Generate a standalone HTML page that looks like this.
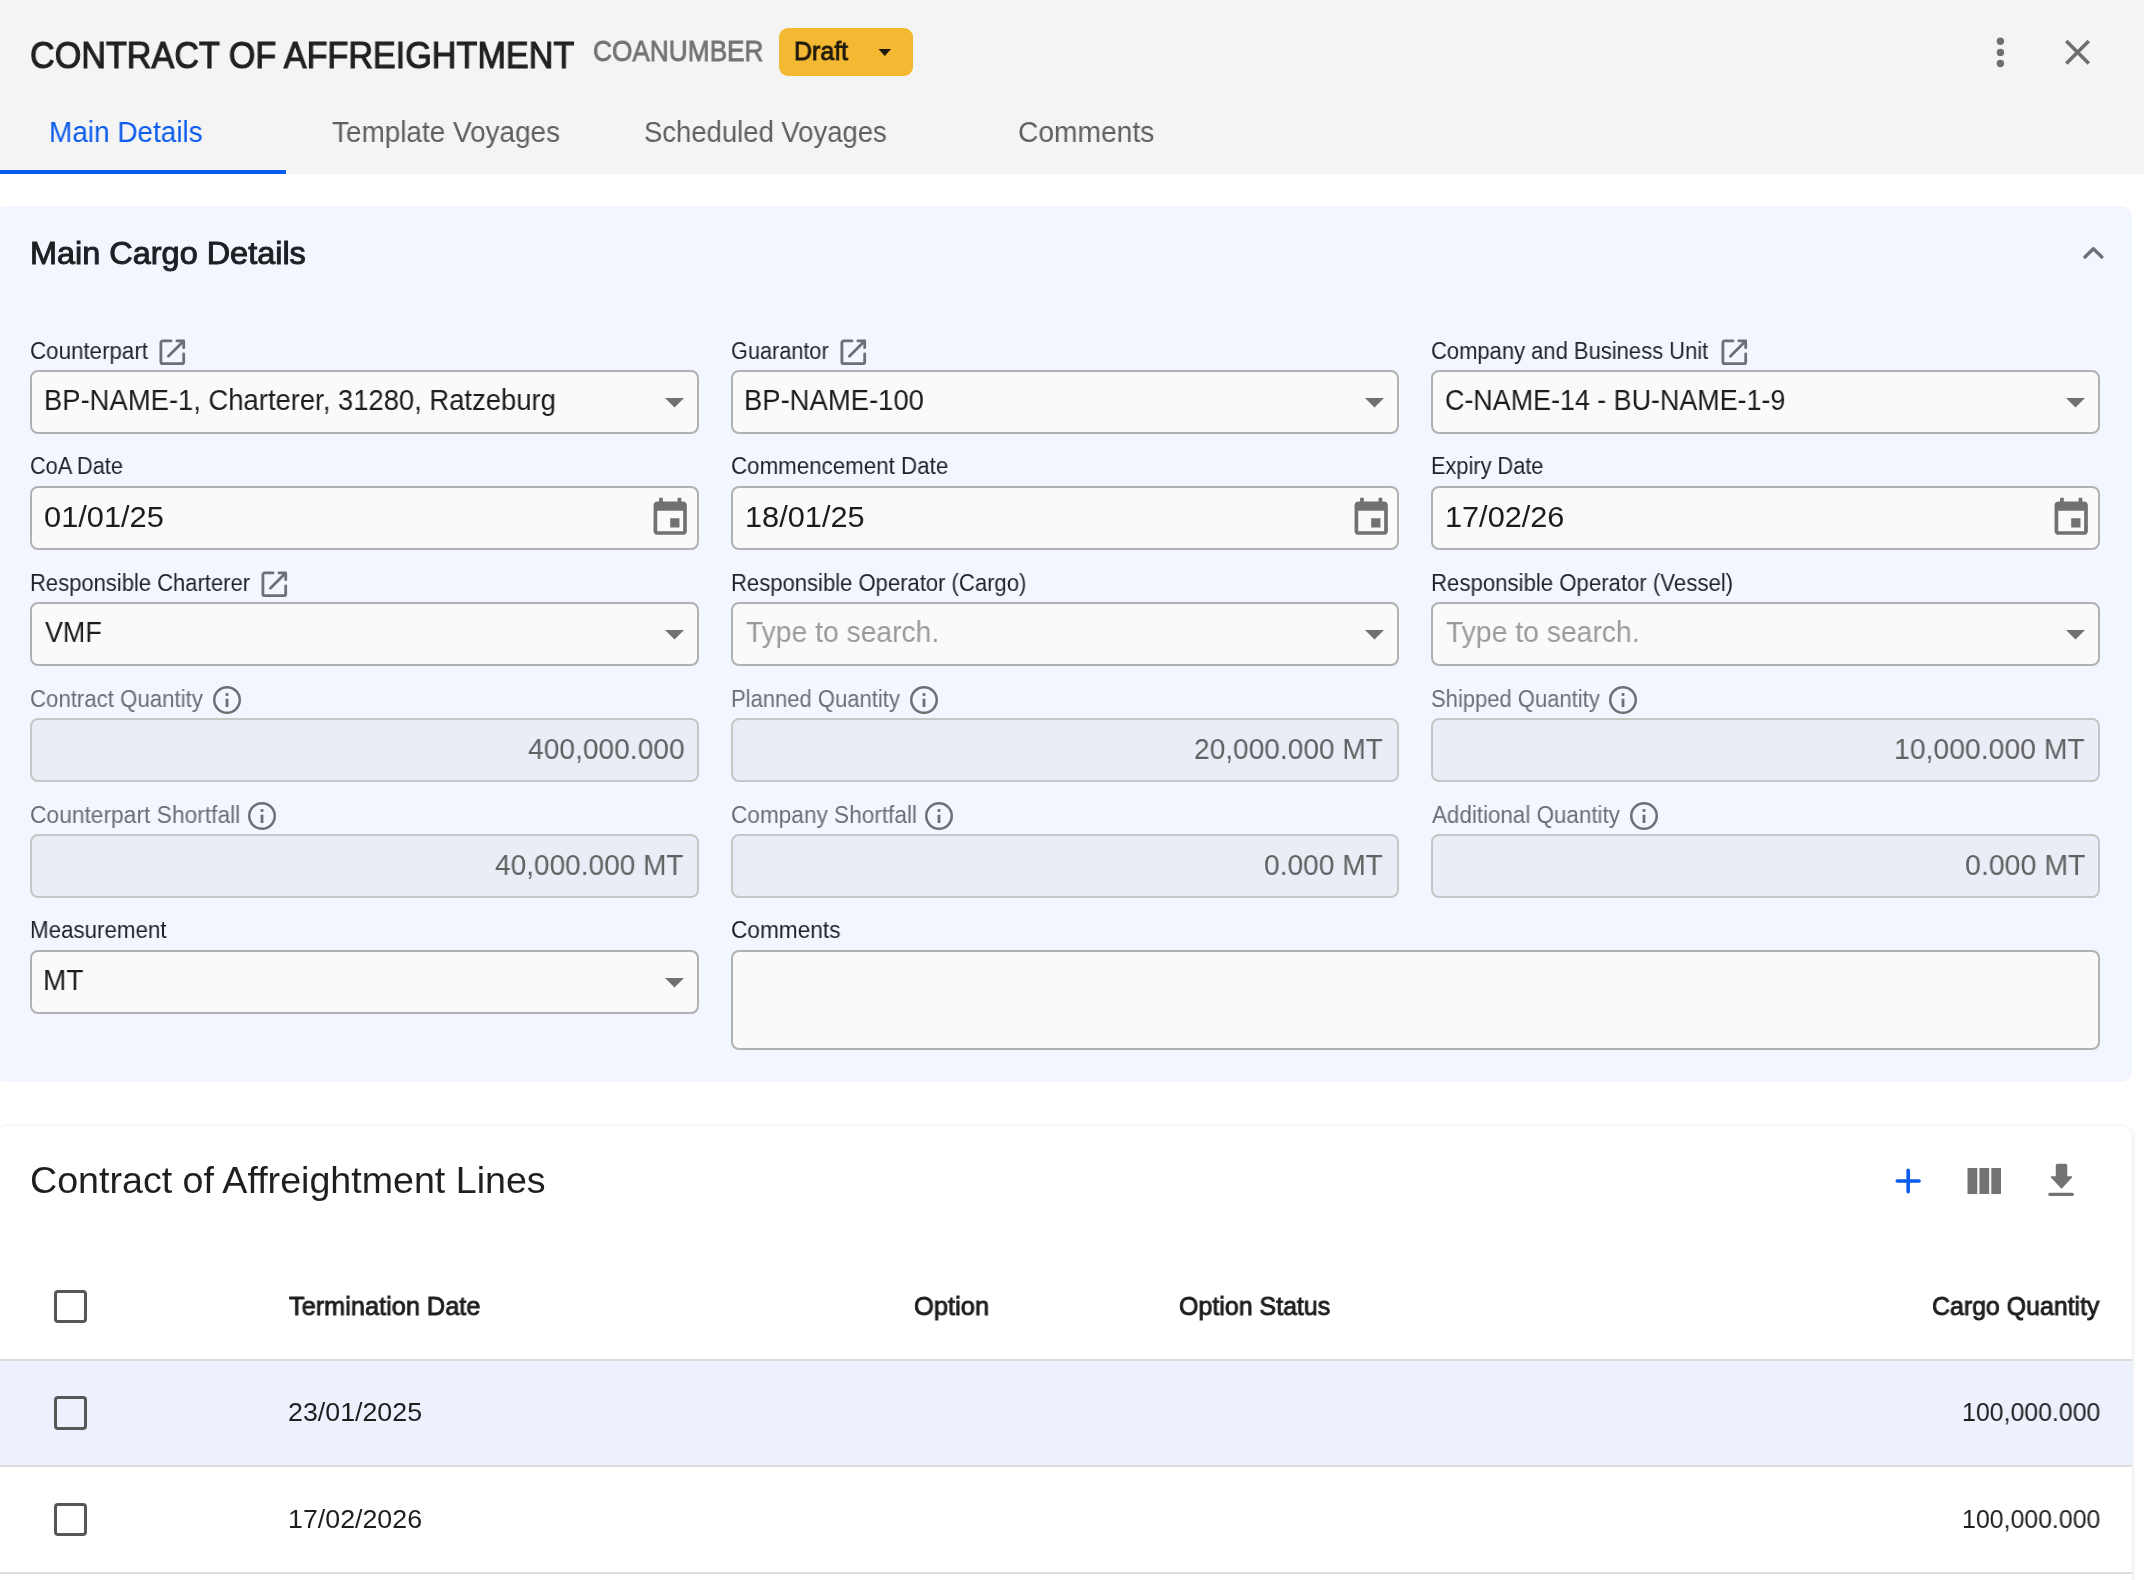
<!DOCTYPE html>
<html><head><meta charset="utf-8"><title>Contract of Affreightment</title>
<style>
html,body{margin:0;padding:0;width:2144px;height:1580px;overflow:hidden;background:#fff;}
body{position:relative;font-family:"Liberation Sans",sans-serif;}
body>div,body>svg,body>span{position:absolute;}
span{line-height:1;white-space:pre;will-change:transform;}
</style></head><body>
<div style="left:0px;top:0px;width:2144px;height:174px;background:#f4f4f4"></div>
<div style="left:0px;top:170px;width:286px;height:4px;background:#0b5cec"></div>
<div style="left:779px;top:28px;width:134px;height:48px;background:#f4b932;border-radius:9px"></div>
<svg style="left:872px;top:44px;" width="24" height="16" viewBox="0 0 24 16"><path d="M6.5,5.1 L19,5.1 L12.75,12 Z" fill="#1f1a0c"/></svg>
<svg style="left:1985px;top:30px;" width="30" height="44" viewBox="0 0 30 44"><circle cx="15.4" cy="11.2" r="3.7" fill="#6f6f6f"/><circle cx="15.4" cy="22.4" r="3.7" fill="#6f6f6f"/><circle cx="15.4" cy="33.5" r="3.7" fill="#6f6f6f"/></svg>
<svg style="left:2056px;top:31px;" width="44" height="44" viewBox="0 0 44 44"><g transform="translate(0.1,-0.1) scale(1.786)"><path d="M19 6.41L17.59 5 12 10.59 6.41 5 5 6.41 10.59 12 5 17.59 6.41 19 12 13.41 17.59 19 19 17.59 13.41 12z" fill="#6f6f6f"/></g></svg>
<div style="left:-4px;top:206px;width:2136px;height:876px;background:#f2f6fe;border-radius:10px"></div>
<svg style="left:2075px;top:236px;" width="38" height="30" viewBox="0 0 38 30"><path d="M10,21 L18.4,12.8 L26.8,21" fill="none" stroke="#6d6f73" stroke-width="3.3" stroke-linecap="round" stroke-linejoin="round"/></svg>
<svg style="left:157.6px;top:337.6px;" width="30" height="30" viewBox="0 0 30 30"><g fill="none" stroke="#6d6f73" stroke-width="2.8" stroke-linecap="round" stroke-linejoin="round"><path d="M13,2.9 H4.6 A1.7,1.7 0 0 0 2.9,4.6 V23.9 A1.7,1.7 0 0 0 4.6,25.6 H24 A1.7,1.7 0 0 0 25.7,23.9 V15.9"/><path d="M18.9,2.9 H25.7 V9.7"/><path d="M25.4,3.2 L10.4,18.2"/></g></svg>
<svg style="left:838.8px;top:337.6px;" width="30" height="30" viewBox="0 0 30 30"><g fill="none" stroke="#6d6f73" stroke-width="2.8" stroke-linecap="round" stroke-linejoin="round"><path d="M13,2.9 H4.6 A1.7,1.7 0 0 0 2.9,4.6 V23.9 A1.7,1.7 0 0 0 4.6,25.6 H24 A1.7,1.7 0 0 0 25.7,23.9 V15.9"/><path d="M18.9,2.9 H25.7 V9.7"/><path d="M25.4,3.2 L10.4,18.2"/></g></svg>
<svg style="left:1719.5px;top:337.6px;" width="30" height="30" viewBox="0 0 30 30"><g fill="none" stroke="#6d6f73" stroke-width="2.8" stroke-linecap="round" stroke-linejoin="round"><path d="M13,2.9 H4.6 A1.7,1.7 0 0 0 2.9,4.6 V23.9 A1.7,1.7 0 0 0 4.6,25.6 H24 A1.7,1.7 0 0 0 25.7,23.9 V15.9"/><path d="M18.9,2.9 H25.7 V9.7"/><path d="M25.4,3.2 L10.4,18.2"/></g></svg>
<div style="left:30px;top:370px;width:668.67px;height:64px;background:#fafafa;border:2px solid #b1b1b1;border-radius:8px;box-sizing:border-box"></div>
<svg style="left:663px;top:396px;" width="24" height="14" viewBox="0 0 24 14"><path d="M2,2 L21,2 L11.5,11.6 Z" fill="#717171"/></svg>
<div style="left:730.67px;top:370px;width:668.67px;height:64px;background:#fafafa;border:2px solid #b1b1b1;border-radius:8px;box-sizing:border-box"></div>
<svg style="left:1363px;top:396px;" width="24" height="14" viewBox="0 0 24 14"><path d="M2,2 L21,2 L11.5,11.6 Z" fill="#717171"/></svg>
<div style="left:1431.33px;top:370px;width:668.67px;height:64px;background:#fafafa;border:2px solid #b1b1b1;border-radius:8px;box-sizing:border-box"></div>
<svg style="left:2064px;top:396px;" width="24" height="14" viewBox="0 0 24 14"><path d="M2,2 L21,2 L11.5,11.6 Z" fill="#717171"/></svg>
<div style="left:30px;top:486px;width:668.67px;height:64px;background:#fafafa;border:2px solid #b1b1b1;border-radius:8px;box-sizing:border-box"></div>
<svg style="left:648px;top:496px;" width="46" height="46" viewBox="0 0 46 46"><g transform="scale(1.8500)"><path d="M17 12h-5v5h5v-5zM16 1v2H8V1H6v2H5c-1.11 0-1.99.9-1.99 2L3 19c0 1.1.89 2 2 2h14c1.1 0 2-.9 2-2V5c0-1.1-.9-2-2-2h-1V1h-2zm3 18H5V8h14v11z" fill="#717171"/></g></svg>
<div style="left:730.67px;top:486px;width:668.67px;height:64px;background:#fafafa;border:2px solid #b1b1b1;border-radius:8px;box-sizing:border-box"></div>
<svg style="left:1349px;top:496px;" width="46" height="46" viewBox="0 0 46 46"><g transform="scale(1.8500)"><path d="M17 12h-5v5h5v-5zM16 1v2H8V1H6v2H5c-1.11 0-1.99.9-1.99 2L3 19c0 1.1.89 2 2 2h14c1.1 0 2-.9 2-2V5c0-1.1-.9-2-2-2h-1V1h-2zm3 18H5V8h14v11z" fill="#717171"/></g></svg>
<div style="left:1431.33px;top:486px;width:668.67px;height:64px;background:#fafafa;border:2px solid #b1b1b1;border-radius:8px;box-sizing:border-box"></div>
<svg style="left:2049px;top:496px;" width="46" height="46" viewBox="0 0 46 46"><g transform="scale(1.8500)"><path d="M17 12h-5v5h5v-5zM16 1v2H8V1H6v2H5c-1.11 0-1.99.9-1.99 2L3 19c0 1.1.89 2 2 2h14c1.1 0 2-.9 2-2V5c0-1.1-.9-2-2-2h-1V1h-2zm3 18H5V8h14v11z" fill="#717171"/></g></svg>
<svg style="left:259.7px;top:570.0px;" width="30" height="30" viewBox="0 0 30 30"><g fill="none" stroke="#6d6f73" stroke-width="2.8" stroke-linecap="round" stroke-linejoin="round"><path d="M13,2.9 H4.6 A1.7,1.7 0 0 0 2.9,4.6 V23.9 A1.7,1.7 0 0 0 4.6,25.6 H24 A1.7,1.7 0 0 0 25.7,23.9 V15.9"/><path d="M18.9,2.9 H25.7 V9.7"/><path d="M25.4,3.2 L10.4,18.2"/></g></svg>
<div style="left:30px;top:602px;width:668.67px;height:64px;background:#fafafa;border:2px solid #b1b1b1;border-radius:8px;box-sizing:border-box"></div>
<svg style="left:663px;top:628px;" width="24" height="14" viewBox="0 0 24 14"><path d="M2,2 L21,2 L11.5,11.6 Z" fill="#717171"/></svg>
<div style="left:730.67px;top:602px;width:668.67px;height:64px;background:#fafafa;border:2px solid #b1b1b1;border-radius:8px;box-sizing:border-box"></div>
<svg style="left:1363px;top:628px;" width="24" height="14" viewBox="0 0 24 14"><path d="M2,2 L21,2 L11.5,11.6 Z" fill="#717171"/></svg>
<div style="left:1431.33px;top:602px;width:668.67px;height:64px;background:#fafafa;border:2px solid #b1b1b1;border-radius:8px;box-sizing:border-box"></div>
<svg style="left:2064px;top:628px;" width="24" height="14" viewBox="0 0 24 14"><path d="M2,2 L21,2 L11.5,11.6 Z" fill="#717171"/></svg>
<svg style="left:213.29999999999998px;top:685.5999999999999px;" width="28" height="28" viewBox="0 0 28 28"><circle cx="14" cy="14" r="12.75" fill="none" stroke="#6d6f73" stroke-width="2.5"/><rect x="12.6" y="7.1" width="2.8" height="2.8" fill="#6d6f73"/><rect x="12.6" y="12.7" width="2.8" height="8.3" fill="#6d6f73"/></svg>
<svg style="left:909.8000000000001px;top:685.5999999999999px;" width="28" height="28" viewBox="0 0 28 28"><circle cx="14" cy="14" r="12.75" fill="none" stroke="#6d6f73" stroke-width="2.5"/><rect x="12.6" y="7.1" width="2.8" height="2.8" fill="#6d6f73"/><rect x="12.6" y="12.7" width="2.8" height="8.3" fill="#6d6f73"/></svg>
<svg style="left:1608.9px;top:685.5999999999999px;" width="28" height="28" viewBox="0 0 28 28"><circle cx="14" cy="14" r="12.75" fill="none" stroke="#6d6f73" stroke-width="2.5"/><rect x="12.6" y="7.1" width="2.8" height="2.8" fill="#6d6f73"/><rect x="12.6" y="12.7" width="2.8" height="8.3" fill="#6d6f73"/></svg>
<div style="left:30px;top:718px;width:668.67px;height:64px;background:#e9edf6;border:2px solid #c6c6c4;border-radius:8px;box-sizing:border-box"></div>
<div style="left:730.67px;top:718px;width:668.67px;height:64px;background:#e9edf6;border:2px solid #c6c6c4;border-radius:8px;box-sizing:border-box"></div>
<div style="left:1431.33px;top:718px;width:668.67px;height:64px;background:#e9edf6;border:2px solid #c6c6c4;border-radius:8px;box-sizing:border-box"></div>
<svg style="left:248.2px;top:801.5999999999999px;" width="28" height="28" viewBox="0 0 28 28"><circle cx="14" cy="14" r="12.75" fill="none" stroke="#6d6f73" stroke-width="2.5"/><rect x="12.6" y="7.1" width="2.8" height="2.8" fill="#6d6f73"/><rect x="12.6" y="12.7" width="2.8" height="8.3" fill="#6d6f73"/></svg>
<svg style="left:925.3000000000001px;top:801.5999999999999px;" width="28" height="28" viewBox="0 0 28 28"><circle cx="14" cy="14" r="12.75" fill="none" stroke="#6d6f73" stroke-width="2.5"/><rect x="12.6" y="7.1" width="2.8" height="2.8" fill="#6d6f73"/><rect x="12.6" y="12.7" width="2.8" height="8.3" fill="#6d6f73"/></svg>
<svg style="left:1629.5px;top:801.5999999999999px;" width="28" height="28" viewBox="0 0 28 28"><circle cx="14" cy="14" r="12.75" fill="none" stroke="#6d6f73" stroke-width="2.5"/><rect x="12.6" y="7.1" width="2.8" height="2.8" fill="#6d6f73"/><rect x="12.6" y="12.7" width="2.8" height="8.3" fill="#6d6f73"/></svg>
<div style="left:30px;top:834px;width:668.67px;height:64px;background:#e9edf6;border:2px solid #c6c6c4;border-radius:8px;box-sizing:border-box"></div>
<div style="left:730.67px;top:834px;width:668.67px;height:64px;background:#e9edf6;border:2px solid #c6c6c4;border-radius:8px;box-sizing:border-box"></div>
<div style="left:1431.33px;top:834px;width:668.67px;height:64px;background:#e9edf6;border:2px solid #c6c6c4;border-radius:8px;box-sizing:border-box"></div>
<div style="left:30px;top:950px;width:668.67px;height:64px;background:#fafafa;border:2px solid #b1b1b1;border-radius:8px;box-sizing:border-box"></div>
<svg style="left:663px;top:976px;" width="24" height="14" viewBox="0 0 24 14"><path d="M2,2 L21,2 L11.5,11.6 Z" fill="#717171"/></svg>
<div style="left:730.67px;top:950px;width:1369.33px;height:100px;background:#fafafa;border:2px solid #b1b1b1;border-radius:8px;box-sizing:border-box"></div>
<div style="left:-4px;top:1126px;width:2136px;height:520px;background:#fff;border-radius:10px;box-shadow:0 1px 5px rgba(0,0,0,0.13)"></div>
<svg style="left:1890px;top:1163px;" width="36" height="36" viewBox="0 0 36 36"><path d="M18.2,7.3 V28.8 M7.3,18 H29.1" stroke="#0b5cec" stroke-width="3.6" stroke-linecap="round"/></svg>
<svg style="left:1967px;top:1168px;" width="35" height="27" viewBox="0 0 35 27"><rect x="0.5" y="0" width="9.8" height="26" fill="#737373"/><rect x="12.4" y="0" width="9.8" height="26" fill="#737373"/><rect x="24.3" y="0" width="9.7" height="26" fill="#737373"/></svg>
<svg style="left:2046px;top:1162px;" width="30" height="36" viewBox="0 0 30 36"><path d="M11.5,2.5 H19.5 A1,1 0 0 1 20.5,3.5 V15 H25.5 L15.5,25.7 L5.5,15 H10.5 V3.5 A1,1 0 0 1 11.5,2.5 Z" fill="#737373" stroke="#737373" stroke-width="1.5" stroke-linejoin="round"/><rect x="2.3" y="30.7" width="25.6" height="3.2" rx="1.6" fill="#737373"/></svg>
<div style="left:0px;top:1359px;width:2132px;height:2px;background:#dcdcdc"></div>
<div style="left:0px;top:1361px;width:2132px;height:104px;background:#edf1fd"></div>
<div style="left:0px;top:1465px;width:2132px;height:2px;background:#dcdcdc"></div>
<div style="left:0px;top:1572px;width:2132px;height:2px;background:#dcdcdc"></div>
<div style="left:53.6px;top:1289.6px;width:33.6px;height:33.6px;border:3.8px solid #575757;border-radius:4px;box-sizing:border-box"></div>
<div style="left:53.6px;top:1396.3px;width:33.6px;height:33.6px;border:3.8px solid #575757;border-radius:4px;box-sizing:border-box"></div>
<div style="left:53.6px;top:1502.7px;width:33.6px;height:33.6px;border:3.8px solid #575757;border-radius:4px;box-sizing:border-box"></div>
<span style="left:30.48px;top:37.00px;font-size:37px;font-weight:400;color:#212121;transform:scaleX(0.9235);transform-origin:0 0;-webkit-text-stroke:1.10px #212121">CONTRACT OF AFFREIGHTMENT</span>
<span style="left:592.60px;top:37.00px;font-size:29px;font-weight:400;color:#737373;transform:scaleX(0.9042);transform-origin:0 0;-webkit-text-stroke:0.80px #737373">COANUMBER</span>
<span style="left:793.88px;top:38.30px;font-size:26px;font-weight:400;color:#1f1a0c;transform:scaleX(0.9598);transform-origin:0 0;-webkit-text-stroke:0.90px #1f1a0c">Draft</span>
<span style="left:48.77px;top:118.00px;font-size:29px;font-weight:400;color:#0b5cec;transform:scaleX(0.9633);transform-origin:0 0">Main Details</span>
<span style="left:332.10px;top:118.00px;font-size:29px;font-weight:400;color:#5f5f5f;transform:scaleX(0.9624);transform-origin:0 0">Template Voyages</span>
<span style="left:644.25px;top:118.00px;font-size:29px;font-weight:400;color:#5f5f5f;transform:scaleX(0.9472);transform-origin:0 0">Scheduled Voyages</span>
<span style="left:1017.73px;top:118.00px;font-size:29px;font-weight:400;color:#5f5f5f;transform:scaleX(0.9719);transform-origin:0 0">Comments</span>
<span style="left:29.87px;top:237.00px;font-size:32px;font-weight:400;color:#1d1f23;transform:scaleX(1.0137);transform-origin:0 0;-webkit-text-stroke:1.00px #1d1f23">Main Cargo Details</span>
<span style="left:29.83px;top:340.00px;font-size:23px;font-weight:400;color:#1f2124;transform:scaleX(0.9714);transform-origin:0 0">Counterpart</span>
<span style="left:731.16px;top:340.00px;font-size:23px;font-weight:400;color:#1f2124;transform:scaleX(0.9427);transform-origin:0 0">Guarantor</span>
<span style="left:1430.94px;top:340.00px;font-size:23px;font-weight:400;color:#1f2124;transform:scaleX(0.9554);transform-origin:0 0">Company and Business Unit</span>
<span style="left:43.91px;top:386.00px;font-size:29px;font-weight:400;color:#1c1c1c;transform:scaleX(0.9451);transform-origin:0 0">BP-NAME-1, Charterer, 31280, Ratzeburg</span>
<span style="left:744.21px;top:386.00px;font-size:29px;font-weight:400;color:#1c1c1c;transform:scaleX(0.9458);transform-origin:0 0">BP-NAME-100</span>
<span style="left:1445.17px;top:386.00px;font-size:29px;font-weight:400;color:#1c1c1c;transform:scaleX(0.9265);transform-origin:0 0">C-NAME-14 - BU-NAME-1-9</span>
<span style="left:29.86px;top:455.00px;font-size:23px;font-weight:400;color:#1f2124;transform:scaleX(0.9436);transform-origin:0 0">CoA Date</span>
<span style="left:731.13px;top:455.00px;font-size:23px;font-weight:400;color:#1f2124;transform:scaleX(0.9711);transform-origin:0 0">Commencement Date</span>
<span style="left:1431.15px;top:455.00px;font-size:23px;font-weight:400;color:#1f2124;transform:scaleX(0.9455);transform-origin:0 0">Expiry Date</span>
<span style="left:44.24px;top:503.00px;font-size:29px;font-weight:400;color:#1c1c1c;transform:scaleX(1.0618);transform-origin:0 0">01/01/25</span>
<span style="left:744.88px;top:503.00px;font-size:29px;font-weight:400;color:#1c1c1c;transform:scaleX(1.0596);transform-origin:0 0">18/01/25</span>
<span style="left:1445.48px;top:503.00px;font-size:29px;font-weight:400;color:#1c1c1c;transform:scaleX(1.0578);transform-origin:0 0">17/02/26</span>
<span style="left:29.84px;top:572.00px;font-size:23px;font-weight:400;color:#1f2124;transform:scaleX(0.9562);transform-origin:0 0">Responsible Charterer</span>
<span style="left:730.84px;top:571.50px;font-size:23px;font-weight:400;color:#1f2124;transform:scaleX(0.9585);transform-origin:0 0">Responsible Operator (Cargo)</span>
<span style="left:1430.94px;top:571.50px;font-size:23px;font-weight:400;color:#1f2124;transform:scaleX(0.9645);transform-origin:0 0">Responsible Operator (Vessel)</span>
<span style="left:45.30px;top:618.00px;font-size:29px;font-weight:400;color:#1c1c1c;transform:scaleX(0.9273);transform-origin:0 0">VMF</span>
<span style="left:745.90px;top:618.00px;font-size:29px;font-weight:400;color:#9b9b9b;transform:scaleX(0.9744);transform-origin:0 0">Type to search.</span>
<span style="left:1446.10px;top:618.00px;font-size:29px;font-weight:400;color:#9b9b9b;transform:scaleX(0.9765);transform-origin:0 0">Type to search.</span>
<span style="left:29.83px;top:688.00px;font-size:23px;font-weight:400;color:#6c6e72;transform:scaleX(0.9660);transform-origin:0 0">Contract Quantity</span>
<span style="left:730.84px;top:688.00px;font-size:23px;font-weight:400;color:#6c6e72;transform:scaleX(0.9571);transform-origin:0 0">Planned Quantity</span>
<span style="left:1430.94px;top:688.00px;font-size:23px;font-weight:400;color:#6c6e72;transform:scaleX(0.9565);transform-origin:0 0">Shipped Quantity</span>
<span style="left:527.90px;top:735.00px;font-size:29px;font-weight:400;color:#616161;transform:scaleX(0.9710);transform-origin:0 0">400,000.000</span>
<span style="left:1194.33px;top:735.00px;font-size:29px;font-weight:400;color:#616161;transform:scaleX(0.9683);transform-origin:0 0">20,000.000 MT</span>
<span style="left:1894.24px;top:735.00px;font-size:29px;font-weight:400;color:#616161;transform:scaleX(0.9780);transform-origin:0 0">10,000.000 MT</span>
<span style="left:29.81px;top:804.00px;font-size:23px;font-weight:400;color:#6c6e72;transform:scaleX(0.9909);transform-origin:0 0">Counterpart Shortfall</span>
<span style="left:730.82px;top:804.00px;font-size:23px;font-weight:400;color:#6c6e72;transform:scaleX(0.9830);transform-origin:0 0">Company Shortfall</span>
<span style="left:1431.90px;top:804.00px;font-size:23px;font-weight:400;color:#6c6e72;transform:scaleX(0.9733);transform-origin:0 0">Additional Quantity</span>
<span style="left:494.60px;top:851.00px;font-size:29px;font-weight:400;color:#616161;transform:scaleX(0.9664);transform-origin:0 0">40,000.000 MT</span>
<span style="left:1264.43px;top:851.00px;font-size:29px;font-weight:400;color:#616161;transform:scaleX(0.9697);transform-origin:0 0">0.000 MT</span>
<span style="left:1964.62px;top:851.00px;font-size:29px;font-weight:400;color:#616161;transform:scaleX(0.9829);transform-origin:0 0">0.000 MT</span>
<span style="left:29.83px;top:919.00px;font-size:23px;font-weight:400;color:#1f2124;transform:scaleX(0.9706);transform-origin:0 0">Measurement</span>
<span style="left:730.82px;top:919.00px;font-size:23px;font-weight:400;color:#1f2124;transform:scaleX(0.9846);transform-origin:0 0">Comments</span>
<span style="left:43.37px;top:966.00px;font-size:29px;font-weight:400;color:#1c1c1c;transform:scaleX(0.9637);transform-origin:0 0">MT</span>
<span style="left:29.88px;top:1162.00px;font-size:37px;font-weight:400;color:#1f1f1f;transform:scaleX(1.0164);transform-origin:0 0">Contract of Affreightment Lines</span>
<span style="left:289.00px;top:1293.00px;font-size:26px;font-weight:400;color:#1e1e1e;transform:scaleX(0.9741);transform-origin:0 0;-webkit-text-stroke:0.90px #1e1e1e">Termination Date</span>
<span style="left:914.02px;top:1293.00px;font-size:26px;font-weight:400;color:#1e1e1e;transform:scaleX(0.9792);transform-origin:0 0;-webkit-text-stroke:0.90px #1e1e1e">Option</span>
<span style="left:1179.04px;top:1293.00px;font-size:26px;font-weight:400;color:#1e1e1e;transform:scaleX(0.9602);transform-origin:0 0;-webkit-text-stroke:0.90px #1e1e1e">Option Status</span>
<span style="left:1932.04px;top:1293.00px;font-size:26px;font-weight:400;color:#1e1e1e;transform:scaleX(0.9576);transform-origin:0 0;-webkit-text-stroke:0.90px #1e1e1e">Cargo Quantity</span>
<span style="left:287.93px;top:1400.00px;font-size:25px;font-weight:400;color:#1e1e1e;transform:scaleX(1.0713);transform-origin:0 0">23/01/2025</span>
<span style="left:1962.00px;top:1400.00px;font-size:25px;font-weight:400;color:#1e1e1e;transform:scaleX(0.9955);transform-origin:0 0">100,000.000</span>
<span style="left:287.93px;top:1507.00px;font-size:25px;font-weight:400;color:#1e1e1e;transform:scaleX(1.0713);transform-origin:0 0">17/02/2026</span>
<span style="left:1962.00px;top:1507.00px;font-size:25px;font-weight:400;color:#1e1e1e;transform:scaleX(0.9955);transform-origin:0 0">100,000.000</span>
</body></html>
